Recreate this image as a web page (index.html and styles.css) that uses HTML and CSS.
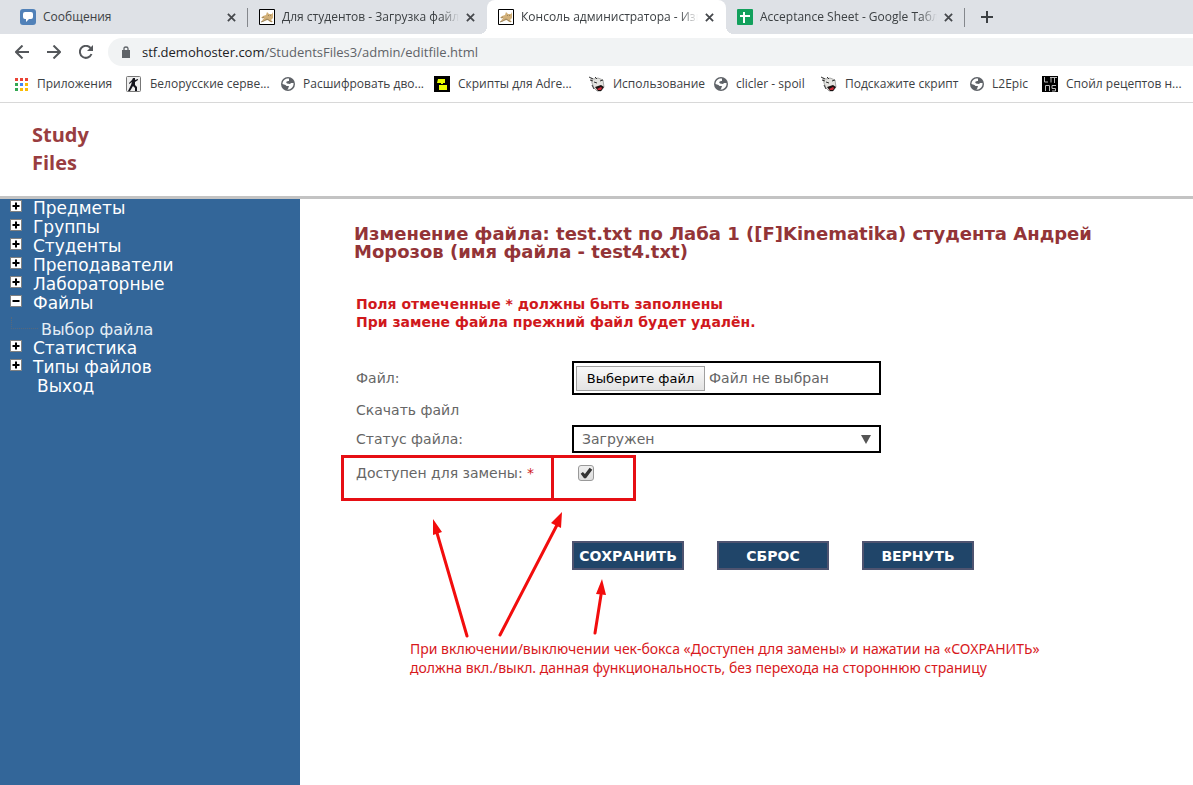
FILE: index.html
```html
<!DOCTYPE html>
<html lang="ru">
<head>
<meta charset="utf-8">
<title>Консоль администратора - Изменение файла</title>
<link rel="stylesheet" href="styles.css">
</head>
<body>
<svg class="defs" aria-hidden="true">
  <symbol id="close" viewBox="0 0 10 10"><path d="M1 1l8 8M9 1l-8 8" stroke="#45484c" stroke-width="2" fill="none"/></symbol>
  <symbol id="cat" viewBox="0 0 16 16"><path fill="#fff" stroke="#000" d="M.5.5h15v15H.5z"/><path fill="#d2b078" d="M2 9l2-2 3-1 1-3 2 2h3l1-2v6l-2 2 2 2h-3l-2-2-4 1-2 1H2l3-4z"/><path stroke="#8d7a58" fill="none" stroke-width=".8" d="M2 13l3-1 3-2 5 3M9 6l1 1M12 6l-1 1M3 9l2-1"/></symbol>
  <symbol id="globe" viewBox="0 0 14 14"><circle cx="7" cy="7" r="7" fill="#5f6368"/><path fill="#fff" d="M8 1.500C4 1 1.500 4 1.500 7l3 1 1 1H8l-1 3-1 .5c4 .5 7-3 6.500-6.500L10 6 9 7 6 6.500 5 5l2-1h1z"/></symbol>
  <symbol id="face" viewBox="0 0 16 16"><path fill="#e4e4e0" stroke="#888" stroke-width=".7" d="M2 2l3 1 4-1 5 2 1 7-3 4H8L5 12 3 7z"/><path stroke="#333" fill="none" d="M0 1l4 2M1 4l3 1M6 1l2 2M5 6l3 1M11 5l3-1M3 9l2 4"/><path fill="#1a1010" d="M6 11l6-2 3 2-3 4H9z"/><path fill="#cc2937" d="M8 13l4-2 1 1-1 2H9z"/></symbol>
  <symbol id="plus" viewBox="0 0 12 12"><path fill="#fff" stroke="#808080" d="M.5.5h11v11H.5z"/><path stroke="#000" stroke-width="2" d="M2.500 6h7M6 2.500v7"/></symbol>
  <symbol id="minus" viewBox="0 0 12 12"><path fill="#fff" stroke="#808080" d="M.5.5h11v11H.5z"/><path stroke="#000" stroke-width="2" d="M2.500 6h7"/></symbol>
</svg>

<div class="browser">
  <div class="tabs">
    <div class="tab"><svg class="icon16" viewBox="0 0 16 16"><rect width="16" height="16" rx="3" fill="#5181b8"/><path fill="#fff" d="M5 3h6q2 0 2 2v3q0 2-2 2H9l-3 3v-3H5q-2 0-2-2V5q0-2 2-2z"/></svg><span class="tab-title">Сообщения</span><button class="close" aria-label="Закрыть"><svg><use href="#close"/></svg></button></div>
    <div class="tab tab-line"><svg class="icon16"><use href="#cat"/></svg><span class="tab-title tab-fade">Для студентов - Загрузка файло</span><button class="close" aria-label="Закрыть"><svg><use href="#close"/></svg></button></div>
    <div class="tab tab-active"><svg class="icon16"><use href="#cat"/></svg><span class="tab-title tab-fade">Консоль администратора - Изм</span><button class="close" aria-label="Закрыть"><svg><use href="#close"/></svg></button></div>
    <div class="tab"><svg class="icon16" viewBox="0 0 16 16"><rect width="16" height="16" rx="1" fill="#12a05c"/><path d="M3 7h10M7 3v11" stroke="#fff" stroke-width="2"/></svg><span class="tab-title tab-fade">Acceptance Sheet - Google Табли</span><button class="close" aria-label="Закрыть"><svg><use href="#close"/></svg></button></div>
    <button class="new-tab" aria-label="Новая вкладка"><svg viewBox="0 0 12 12"><path d="M6 0v12M0 6h12" stroke="#3c4043" stroke-width="2"/></svg></button>
  </div>
  <div class="toolbar">
    <button class="nav-btn" aria-label="Назад"><svg viewBox="0 0 14 14"><path d="M14 7H1M7.500.5L1 7l6.500 6.500"/></svg></button>
    <button class="nav-btn" aria-label="Вперёд"><svg viewBox="0 0 14 14"><path d="M0 7h13M6.500.5L13 7l-6.500 6.500"/></svg></button>
    <button class="nav-btn" aria-label="Обновить"><svg viewBox="0 0 14 14"><path d="M12.500 9A6 6 0 1 1 11.500 3"/><path class="solid" d="M14 0v6H8z"/></svg></button>
    <div class="address"><svg class="lock" viewBox="0 0 8 12"><path fill="#5f6368" d="M0 4h8v8H0z"/><path d="M2 5V2.500Q2 1 4 1t2 1.500V5" fill="none" stroke="#5f6368" stroke-width="1.300"/></svg><span><b class="host">stf.demohoster.com</b>/StudentsFiles3/admin/editfile.html</span></div>
  </div>
  <nav class="bookmarks">
    <a href="#"><svg class="icon14" viewBox="0 0 14 14"><path fill="#ea4335" d="M0 1h3v3H0zM5 1h3v3H5zM10 1h3v3h-3z"/><path fill="#34a853" d="M0 6h3v3H0zM0 11h3v3H0z"/><path fill="#4285f4" d="M5 6h3v3H5z"/><path fill="#fbbc05" d="M10 6h3v3h-3zM5 11h3v3H5zM10 11h3v3h-3z"/></svg>Приложения</a>
    <a href="#"><svg class="icon16" viewBox="0 0 16 16"><rect x=".5" y=".5" width="14" height="15" rx="1" fill="#eee" stroke="#777"/><path fill="#15151d" d="M7 2h2v2l3-1v1L9 6v3l2 2v4H9v-3L7 10l-3 5H2l3-6 1-3-3 2V7l3-3z"/></svg>Белорусские серве...</a>
    <a href="#"><svg class="icon14"><use href="#globe"/></svg>Расшифровать дво...</a>
    <a href="#"><svg class="icon16" viewBox="0 0 16 16"><path d="M0 0h16v16H0z"/><path fill="#eaff00" d="M4 3h7v4H9v2h4v5H5V9h2V7H3z"/><path stroke="#000" d="M4 8.500h8" /></svg>Скрипты для Adre...</a>
    <a href="#"><svg class="icon16"><use href="#face"/></svg>Использование</a>
    <a href="#"><svg class="icon14"><use href="#globe"/></svg>clicler - spoil</a>
    <a href="#"><svg class="icon16"><use href="#face"/></svg>Подскажите скрипт</a>
    <a href="#"><svg class="icon14"><use href="#globe"/></svg>L2Epic</a>
    <a href="#"><svg class="icon16" viewBox="0 0 16 16"><path d="M0 0h16v16H0z"/><path stroke="#bbb" fill="none" d="M2.500 1v5H6M8 1.500h2M9 1.500v5M12.500 1v6M10 1.500h5M3.500 15V9.500h4V15M14 9.500h-4v3h3.500V15H10"/></svg>Спойл рецептов н...</a>
  </nav>
</div>

<header class="site-header"><div class="logo">Study<br>Files</div></header>

<div class="layout">
  <nav class="sidebar">
    <a href="#"><svg><use href="#plus"/></svg>Предметы</a>
    <a href="#"><svg><use href="#plus"/></svg>Группы</a>
    <a href="#"><svg><use href="#plus"/></svg>Студенты</a>
    <a href="#"><svg><use href="#plus"/></svg>Преподаватели</a>
    <a href="#"><svg><use href="#plus"/></svg>Лабораторные</a>
    <a href="#"><svg><use href="#minus"/></svg>Файлы</a>
    <a href="#" class="sub">Выбор файла</a>
    <a href="#"><svg><use href="#plus"/></svg>Статистика</a>
    <a href="#"><svg><use href="#plus"/></svg>Типы файлов</a>
    <a href="#" class="exit">Выход</a>
  </nav>
  <main class="content">
    <h1>Изменение файла: test.txt по Лаба 1 ([F]Kinematika) студента Андрей Морозов (имя файла - test4.txt)</h1>
    <p class="notice">Поля отмеченные * должны быть заполнены<br>При замене файла прежний файл будет удалён.</p>
    <form class="edit">
      <div class="row"><label for="file">Файл:</label>
        <div class="file-box"><input type="file" id="file" class="file-input"><label for="file" class="file-btn">Выберите файл</label><span>Файл не выбран</span></div></div>
      <div class="row row-link"><a href="#">Скачать файл</a></div>
      <div class="row"><label for="status">Статус файла:</label>
        <div class="select-box"><select id="status"><option>Загружен</option></select><svg viewBox="0 0 10 9"><path fill="#555" d="M0 0h10L5 9z"/></svg></div></div>
      <div class="row row-check"><label for="replace">Доступен для замены: <span class="star">*</span></label><input type="checkbox" id="replace" checked><div class="mark"></div></div>
      <div class="actions"><button type="submit">СОХРАНИТЬ</button><button type="reset">СБРОС</button><button type="button">ВЕРНУТЬ</button></div>
    </form>
    <p class="note">При включении/выключении чек-бокса «Доступен для замены» и нажатии на «СОХРАНИТЬ»<br>должна вкл./выкл. данная функциональность, без перехода на стороннюю страницу</p>
    <svg class="arrows" viewBox="0 0 180 130"><g stroke="#f20d0d" stroke-width="3" stroke-linecap="round"><path d="M37 125L7 22M70 124L127 14M165 122L171 84"/></g><path fill="#f20d0d" d="M3 8l9 13-9 3zM132 1l-1 16-10-5zM172 68l4 16-10-1z"/></svg>
  </main>
</div>
</body>
</html>
```
FILE: styles.css
```css
* { box-sizing: border-box; }
body {
  margin: 0;
  min-height: 100vh;
  display: flex;
  flex-direction: column;
  background: #fff;
  font-family: "DejaVu Sans", sans-serif;
}
a { color: inherit; text-decoration: none; }
button { border: 0; padding: 0; background: none; font: inherit; }
svg { flex: none; }
.defs { display: none; }
.icon16 { width: 16px; height: 16px; }
.icon14 { width: 14px; height: 14px; }

.browser {
  font: 12px/16px "Open Sans", sans-serif;
  color: #3c4043;
  border-bottom: 1px solid #d8d8d8;
  overflow: hidden;
}
.tabs { display: flex; height: 34px; padding-left: 9px; background: #dee1e6; }
.tab {
  position: relative;
  display: flex;
  align-items: center;
  gap: 7px;
  width: 239px;
  padding: 0 12px 0 11px;
}
.tab-title {
  flex: 1;
  overflow: hidden;
  white-space: nowrap;
}
.tab-fade {
  -webkit-mask-image: linear-gradient(to right, #000 90%, transparent);
  mask-image: linear-gradient(to right, #000 90%, transparent);
}
.tab-line::before,
.new-tab::before {
  content: "";
  position: absolute;
  left: -1px;
  top: 8px;
  width: 1px;
  height: 19px;
  background: #84878c;
}
.tab-active { background: #fff; border-radius: 8px 8px 0 0; }
.tab-active::before,
.tab-active::after {
  content: "";
  position: absolute;
  bottom: 0;
  width: 8px;
  height: 8px;
}
.tab-active::before { left: -8px; background: radial-gradient(circle at 0 0, transparent 8px, #fff 8px); }
.tab-active::after { right: -8px; background: radial-gradient(circle at 100% 0, transparent 8px, #fff 8px); }
.close { display: flex; }
.close svg { width: 9px; height: 9px; }
.new-tab { position: relative; width: 44px; display: flex; align-items: center; justify-content: center; }
.new-tab svg { width: 12px; height: 12px; }

.toolbar { display: flex; align-items: center; height: 36px; padding-left: 15px; gap: 18px; }
.nav-btn { display: flex; }
.nav-btn svg { width: 14px; height: 14px; fill: none; stroke: #54575b; stroke-width: 2; }
.nav-btn .solid { fill: #54575b; stroke: none; }
.address {
  flex: 1;
  display: flex;
  align-items: center;
  gap: 12px;
  height: 28px;
  margin-left: -3px;
  padding-left: 14px;
  border-radius: 14px 0 0 14px;
  background: #f1f3f4;
  color: #5f6368;
  font-size: 13px;
}
.host { font-weight: 400; color: #202124; }
.lock { width: 8px; height: 12px; }
.bookmarks {
  display: grid;
  grid-template-columns: 111px 155px 153px 155px 125px 107px 149px 72px 1fr;
  height: 32px;
  padding: 0 0 4px 15px;
}
.bookmarks a { display: flex; align-items: center; gap: 8px; white-space: nowrap; }

.site-header { height: 96px; padding: 18px 32px; border-bottom: 3px solid #c3c3c3; }
.logo { color: #993d40; font: bold 20px/28px "Open Sans", sans-serif; }

.layout { flex: 1; display: flex; }
.sidebar {
  width: 300px;
  flex: none;
  background: #336699;
  color: #fff;
  font-size: 17px;
  line-height: 19px;
}
.sidebar a { display: flex; gap: 11px; padding-left: 10px; }
.sidebar svg { width: 12px; height: 12px; margin-top: 1px; }
.sidebar .sub { position: relative; padding: 8px 0 0 41px; font-size: 16px; line-height: 18px; color: #e4edf5; }
.sub::before {
  content: "";
  position: absolute;
  left: 11px;
  top: 4px;
  width: 26px;
  height: 11px;
  border: 1px dotted #56687c;
  border-width: 0 0 1px 1px;
}
.sidebar .exit { padding-left: 37px; }

.content { position: relative; flex: 1; padding: 26px 56px 0; color: #666; font-size: 14px; }
h1 { max-width: 760px; margin: 0 0 0 -2px; font-size: 18px; line-height: 18px; color: #933437; }
.notice { margin: 34px 0 30px; color: #d0181c; font-weight: 700; line-height: 18px; }
.row { display: grid; grid-template-columns: 216px 309px; align-items: center; }
.row-link { height: 30px; }
.file-box {
  position: relative;
  display: flex;
  align-items: center;
  gap: 4px;
  height: 34px;
  padding: 0 2px;
  border: 2px solid #000;
}
.file-input { position: absolute; width: 1px; height: 1px; opacity: 0; }
.file-btn {
  width: 129px;
  border: 1px solid #a0a0a0;
  background: linear-gradient(#f9f9f9, #e3e3e3);
  color: #000;
  line-height: 23px;
  text-align: center;
  font-size: 13px;
}
.select-box { position: relative; height: 28px; border: 2px solid #000; }
.select-box select {
  width: 100%;
  height: 24px;
  padding: 0 8px;
  border: 0;
  appearance: none;
  background: none;
  color: #666;
  font: 14px "DejaVu Sans", sans-serif;
}
.select-box svg { position: absolute; right: 8px; top: 8px; width: 10px; height: 9px; pointer-events: none; }
.row-check { position: relative; height: 40px; }
.star { color: #d0181c; }
.row-check input {
  appearance: none;
  width: 16px;
  height: 16px;
  margin: 0 6px;
  border: 1px solid #999;
  border-radius: 3px;
  background: linear-gradient(#eee, #ddd);
  display: grid;
}
.row-check input:checked::before {
  content: "";
  background: #333;
  clip-path: polygon(12% 55%, 28% 42%, 42% 58%, 76% 12%, 95% 26%, 50% 88%, 36% 88%);
}
.mark {
  position: absolute;
  left: -15px;
  top: 2px;
  width: 295px;
  height: 46px;
  border: 3px solid #e60f14;
  pointer-events: none;
}
.mark::after {
  content: "";
  position: absolute;
  left: 207px;
  top: 0;
  bottom: 0;
  width: 3px;
  background: #e60f14;
}
.actions { display: flex; gap: 33px; margin: 48px 0 0 216px; }
.actions button {
  width: 112px;
  height: 29px;
  border: 2px solid #4f5470;
  background: #204569;
  color: #fff;
  font: bold 14px "DejaVu Sans", sans-serif;
}
.note {
  margin: 69px 0 0 54px;
  color: #d8191d;
  font: 14px/19px "Noto Sans", sans-serif;
  white-space: nowrap;
}
.arrows { position: absolute; left: 130px; top: 312px; width: 180px; height: 130px; pointer-events: none; }
```
